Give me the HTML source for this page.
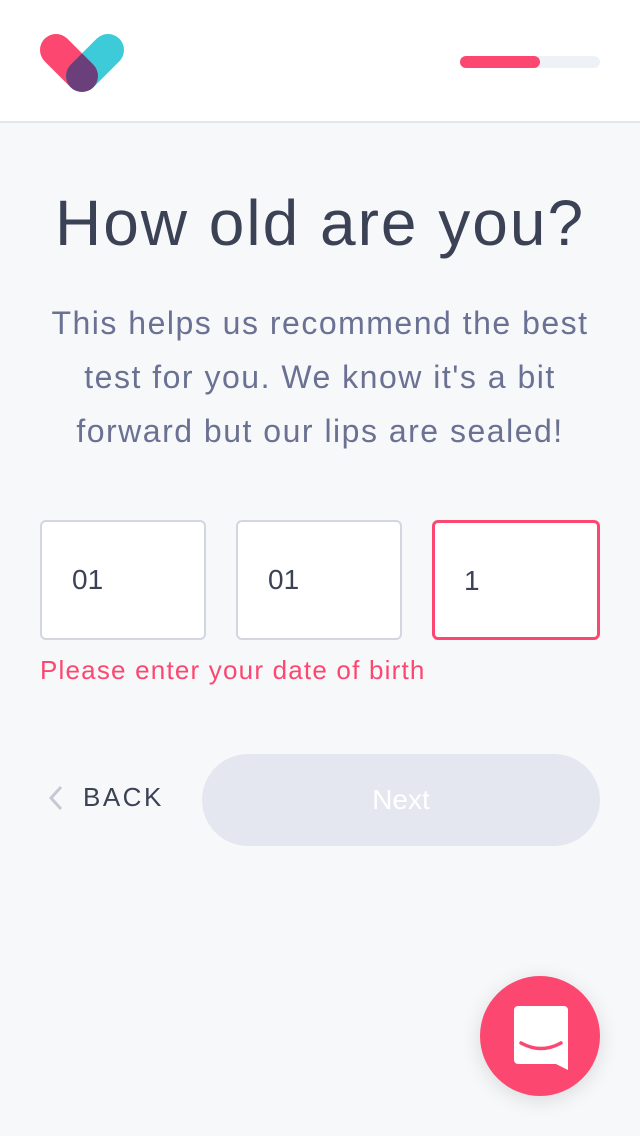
<!DOCTYPE html>
<html><head><meta charset="utf-8"><style>
*{margin:0;padding:0;box-sizing:border-box}
body{width:640px;height:1136px;background:#f7f8fa;font-family:"Liberation Sans",sans-serif;position:relative;overflow:hidden}
.hdr{position:absolute;left:0;top:0;width:640px;height:123px;background:#fff;border-bottom:2px solid #e4e6ee}
.bar{position:absolute;left:460px;top:56px;width:140px;height:12px;border-radius:6px;background:#eef1f5}
.bar i{position:absolute;left:0;top:0;width:80px;height:12px;border-radius:6px;background:#fc4870}
h1{position:absolute;top:186px;width:640px;text-align:center;font-size:64px;font-weight:normal;color:#3c4255;letter-spacing:2px}
p{position:absolute;top:296px;left:0;width:640px;text-align:center;font-size:32px;line-height:54px;color:#6b7193;letter-spacing:1.5px;white-space:nowrap}
.box{position:absolute;top:520px;width:166px;height:120px;background:#fff;border:2px solid #d3d6e0;border-radius:6px;font-size:28px;color:#3c4255;padding:42px 0 0 30px}
.err{position:absolute;left:40px;top:655px;font-size:26px;color:#fc4870;letter-spacing:1.2px}
.back{position:absolute;top:782px;font-size:26px;letter-spacing:2.5px;color:#3c4255}
.next{position:absolute;left:202px;top:754px;width:398px;height:92px;border-radius:46px;background:#e4e7f0;color:#fff;font-size:28px;text-align:center;line-height:92px}
.chat{position:absolute;left:480px;top:976px;width:120px;height:120px;border-radius:60px;background:#fc4870;box-shadow:0 4px 20px rgba(0,0,0,.12)}
</style></head><body>
<div class="hdr">
<svg width="140" height="123" style="position:absolute;left:0;top:0">
<defs><mask id="m" maskUnits="userSpaceOnUse" x="0" y="0" width="140" height="123"><rect width="140" height="123" fill="#000"/><line x1="56" y1="50" x2="82" y2="76" stroke="#fff" stroke-width="32" stroke-linecap="round"/></mask></defs>
<line x1="56" y1="50" x2="82" y2="76" stroke="#fc4870" stroke-width="32" stroke-linecap="round"/>
<line x1="108" y1="50" x2="82" y2="76" stroke="#3ecbd9" stroke-width="32" stroke-linecap="round"/>
<g mask="url(#m)"><line x1="108" y1="50" x2="82" y2="76" stroke="#6a3f7a" stroke-width="32" stroke-linecap="round"/></g>
</svg>
<div class="bar"><i></i></div>
</div>
<h1>How old are you?</h1>
<p>This helps us recommend the best<br>test for you. We know it's a bit<br>forward but our lips are sealed!</p>
<div class="box" style="left:40px">01</div>
<div class="box" style="left:236px">01</div>
<div class="box" style="left:432px;width:168px;border:3px solid #fc4870;padding-left:29px">1</div>
<div class="err">Please enter your date of birth</div>
<svg width="20" height="30" style="position:absolute;left:46px;top:784px"><path d="M15 3 L5 14 L15 25" stroke="#c6c9d4" stroke-width="3" fill="none"/></svg>
<div class="back" style="left:83px">BACK</div>
<div class="next">Next</div>
<div class="chat"><svg width="120" height="120">
<path d="M38 30 H84 A4 4 0 0 1 88 34 V94 L76 88 H38 A4 4 0 0 1 34 84 V34 A4 4 0 0 1 38 30 Z" fill="#fff"/>
<path d="M41 67 Q61 78 81 67" stroke="#fc4870" stroke-width="3.5" fill="none" stroke-linecap="round"/>
</svg></div>
</body></html>
